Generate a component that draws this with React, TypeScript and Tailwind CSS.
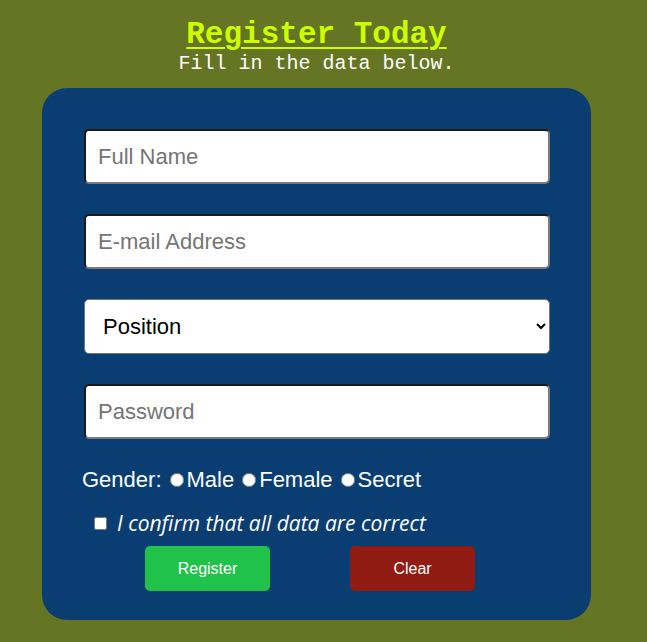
import React from "react";

export default function App() {
  const inputCls =
    "h-[55px] w-[466px] rounded-[5px] border-2 border-[#7a7a7a] border-t-[#1a1a1a] border-l-[#1a1a1a] bg-white px-[12px] text-[22px] text-black placeholder:text-[#757575] outline-none";
  return (
    <div className="min-h-[642px] w-full bg-[#657524] pt-[18px] pb-[23px]">
      <div className="ml-[42px] w-[549px]">
        <h1 className="text-center font-['Courier_New','Liberation_Mono',monospace] text-[31px] font-bold leading-[34px] text-[#ccff00] underline decoration-2 underline-offset-[4px]">
          Register Today
        </h1>
        <p className="mt-[1px] text-center font-['Courier_New','Liberation_Mono',monospace] text-[20px] leading-[22px] text-white">
          Fill in the data below.
        </p>
        <form className="mt-[13px] rounded-[25px] bg-[#0a3e73] px-[42px] pt-[41px] pb-[29px] font-['Liberation_Sans',Arial,sans-serif]">
          <div className="flex flex-col gap-[30px]">
            <input type="text" placeholder="Full Name" className={inputCls} />
            <input type="email" placeholder="E-mail Address" className={inputCls} />
            <select
              defaultValue=""
              className="h-[55px] w-[466px] rounded-[5px] border border-[#767676] bg-white pl-[14px] pr-[2px] text-[22px] text-black outline-none"
            >
              <option value="">Position</option>
              <option value="dev">Developer</option>
              <option value="des">Designer</option>
            </select>
            <input type="password" placeholder="Password" className={inputCls} />
          </div>
          <div className="mt-[28px] -ml-[2px] flex items-center text-[22px] leading-[26px] text-white">
            <span>Gender:</span>
            <input type="radio" name="g" className="ml-[8px] mr-[3px] h-[14px] w-[14px]" />
            <span>Male</span>
            <input type="radio" name="g" className="ml-[8px] mr-[3px] h-[14px] w-[14px]" />
            <span>Female</span>
            <input type="radio" name="g" className="ml-[8px] mr-[3px] h-[14px] w-[14px]" />
            <span>Secret</span>
          </div>
          <div className="mt-[17px] flex items-center pl-[10px]">
            <input type="checkbox" className="h-[13px] w-[13px]" />
            <span className="ml-[10px] font-['Open_Sans',sans-serif] text-[21px] italic leading-[26px] text-white">
              I confirm that all data are correct
            </span>
          </div>
          <div className="mt-[10px] flex gap-[80px] pl-[61px]">
            <button type="button" className="h-[45px] w-[125px] rounded-[5px] bg-[#1fc34a] text-[16px] text-white">
              Register
            </button>
            <button type="button" className="h-[45px] w-[125px] rounded-[5px] bg-[#8f1b12] text-[16px] text-white">
              Clear
            </button>
          </div>
        </form>
      </div>
    </div>
  );
}
